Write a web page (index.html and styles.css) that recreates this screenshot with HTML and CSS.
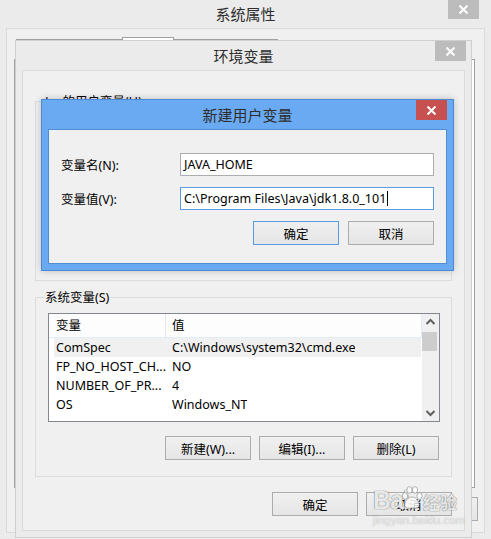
FILE: index.html
```html
<!DOCTYPE html>
<html lang="zh-CN">
<head>
<meta charset="utf-8">
<title>新建用户变量</title>
<link rel="stylesheet" href="styles.css">
</head>
<body>
<div class="desk">

  <!-- 系统属性 window (background) -->
  <section class="win sys">
    <div class="titlebar"><span class="title">系统属性</span><span class="close grey"><svg width="11" height="9" viewBox="0 0 11 9"><path d="M1.5 0.5 L9.5 8.5 M9.5 0.5 L1.5 8.5" stroke="#fff" stroke-width="2"/></svg></span></div>
    <div class="sys-client">
      <div class="tabs"><span class="tab t1"></span><span class="tab sel"></span><span class="tab t3"></span></div>
      <div class="tabpanel"></div>
      <div class="sys-btns"><span class="btn peek"></span></div>
    </div>
  </section>

  <!-- 环境变量 window -->
  <section class="win env">
    <div class="titlebar"><span class="title">环境变量</span><span class="close grey"><svg width="11" height="9" viewBox="0 0 11 9"><path d="M1.5 0.5 L9.5 8.5 M9.5 0.5 L1.5 8.5" stroke="#fff" stroke-width="2"/></svg></span></div>
    <div class="env-client">
      <div class="group user-group">
        <span class="gb-label">Lu 的用户变量(U)</span>
      </div>
      <div class="group sys-group">
        <span class="gb-label">系统变量(S)</span>
        <div class="listbox">
          <div class="list-main">
            <div class="lv-head"><span class="hc c1">变量</span><span class="hc c2">值</span></div>
            <div class="lv-rows">
              <div class="lv-row hover"><span class="c1">ComSpec</span><span class="c2">C:\Windows\system32\cmd.exe</span></div>
              <div class="lv-row"><span class="c1">FP_NO_HOST_CH...</span><span class="c2">NO</span></div>
              <div class="lv-row"><span class="c1">NUMBER_OF_PR...</span><span class="c2">4</span></div>
              <div class="lv-row"><span class="c1">OS</span><span class="c2">Windows_NT</span></div>
            </div>
          </div>
          <div class="vscroll">
            <svg class="arr" width="17" height="17" viewBox="0 0 17 17"><path d="M4.5 10 L8.5 6 L12.5 10" fill="none" stroke="#606060" stroke-width="2"/></svg>
            <div class="thumb"></div>
            <div class="track"></div>
            <svg class="arr" width="17" height="17" viewBox="0 0 17 17"><path d="M4.5 7 L8.5 11 L12.5 7" fill="none" stroke="#606060" stroke-width="2"/></svg>
          </div>
        </div>
        <div class="btn-row">
          <span class="btn">新建(W)...</span>
          <span class="btn">编辑(I)...</span>
          <span class="btn">删除(L)</span>
        </div>
      </div>
      <div class="btn-row bottom">
        <span class="btn">确定</span>
        <span class="btn">取消</span>
      </div>
    </div>
  </section>

  <!-- 新建用户变量 dialog (active) -->
  <section class="win dlg">
    <div class="titlebar"><span class="title">新建用户变量</span><span class="close red"><svg width="11" height="9" viewBox="0 0 11 9"><path d="M1.5 0.5 L9.5 8.5 M9.5 0.5 L1.5 8.5" stroke="#fff" stroke-width="2"/></svg></span></div>
    <div class="dlg-client">
      <div class="field">
        <label class="flabel">变量名(N):</label>
        <div class="input">JAVA_HOME</div>
      </div>
      <div class="field">
        <label class="flabel">变量值(V):</label>
        <div class="input focus">C:\Program Files\Java\jdk1.8.0_101<span class="caret"></span></div>
      </div>
      <div class="btn-row dlg-btns">
        <span class="btn default">确定</span>
        <span class="btn">取消</span>
      </div>
    </div>
  </section>

  <!-- Baidu watermark overlay -->
  <div class="watermark">
    <div class="wm-top">
      <span class="wm-bai">Bai</span>
      <svg class="wm-paw" width="22" height="26" viewBox="0 0 22 26">
        <g fill="rgba(255,255,255,0.8)" stroke="rgba(120,120,120,0.55)" stroke-width="1">
          <ellipse cx="4" cy="11" rx="2.6" ry="3.4"/>
          <ellipse cx="8.5" cy="5" rx="2.6" ry="3.4"/>
          <ellipse cx="14" cy="5" rx="2.6" ry="3.4"/>
          <ellipse cx="18.5" cy="11" rx="2.6" ry="3.4"/>
          <path d="M11 12 C6 12 3 18 4 21 C5 24 9 23 11 23 C13 23 17 24 18 21 C19 18 16 12 11 12 Z"/>
        </g>
      </svg>
      <span class="wm-jy">经验</span>
    </div>
    <div class="wm-url">jingyan.baidu.com</div>
  </div>

</div>
</body>
</html>
```
FILE: styles.css
```css
* { box-sizing: border-box; }

html, body {
  margin: 0;
  padding: 0;
  background: #ebebeb;
}

body {
  width: 491px;
  height: 539px;
  overflow: hidden;
  font-family: "Noto Sans", "Noto Sans CJK SC", sans-serif;
  font-size: 12.5px;
  color: #000;
}

.desk {
  position: relative;
  width: 491px;
  height: 539px;
  overflow: hidden;
}

/* ---------- generic window ---------- */
.win {
  position: absolute;
  background: #ebebeb;
}

.titlebar {
  position: relative;
  display: flex;
  align-items: center;
  justify-content: center;
}

.title {
  font-family: "Noto Sans CJK SC", sans-serif;
  font-size: 15px;
  color: #2e2e2e;
  line-height: 18px;
}

.close {
  position: absolute;
  top: 0;
  right: 6px;
  width: 31px;
  height: 20px;
  display: flex;
  align-items: center;
  justify-content: center;
}
.close.grey { background: #bcbcbc; }
.close.red { background: #c75050; }

/* ---------- 系统属性 ---------- */
.sys {
  left: 0;
  top: 0;
  width: 491px;
  height: 539px;
  padding: 0 6px;
}
.sys .titlebar { height: 28px; }
.sys .close { right: 6px; height: 19px; }

.sys-client {
  height: 505px;
  border: 1px solid #dadada;
  background: #f0f0f0;
}

.tabs {
  display: flex;
  align-items: flex-start;
  margin: 8px 0 0 9px;
  height: 22px;
}
.tab { height: 20px; margin-top: 2px; border-top: 1px solid #a0a0a0; }
.tab.t1 { width: 106px; }
.tab.sel {
  width: 52px;
  height: 22px;
  margin-top: 0;
  border: 1px solid #a0a0a0;
  border-bottom: none;
  background: #fff;
}
.tab.t3 { width: 104px; }

.tabpanel {
  margin-left: 7px;
  width: 461px;
  height: 429px;
  border: 1px solid #a0a0a0;
  background: #fff;
}

.sys-btns {
  display: flex;
  justify-content: flex-end;
  padding-right: 6px;
  margin-top: 9px;
}
.btn.peek { width: 87px; }

/* ---------- 环境变量 ---------- */
.env {
  left: 15px;
  top: 40px;
  width: 457px;
  height: 498px;
  border: 1px solid #cfcfcf;
  padding: 0 6px;
}
.env .titlebar { height: 29px; }
.env .close { right: -1px; }

.env-client {
  height: 461px;
  border: 1px solid #dadada;
  background: #f0f0f0;
  padding: 0 0 0 12px;
}

.group {
  width: 417px;
  border: 1px solid #dcdcdc;
  display: flex;
  flex-direction: column;
}
.user-group {
  margin-top: 30px;
  height: 180px;
}
.sys-group {
  margin-top: 16px;
  height: 180px;
  padding-left: 12px;
}

.gb-label {
  align-self: flex-start;
  margin: -9px 0 0 -4px;
  padding: 0 1px;
  background: #f0f0f0;
  line-height: 17px;
  font-size: 12.5px;
  color: #000;
}
.user-group .gb-label { margin-left: 8px; }

/* listbox */
.listbox {
  margin-top: 7px;
  width: 392px;
  height: 109px;
  border: 1px solid #828790;
  background: #fff;
  display: flex;
  overflow: hidden;
}
.list-main {
  flex: 1;
  overflow: hidden;
}
.lv-head {
  display: flex;
  height: 24px;
  line-height: 23px;
  width: 373px;
  border-bottom: 1px solid #e3ecf8;
  border-right: 1px solid #e3ecf8;
  background: #fdfdfd;
}
.hc.c1 {
  width: 117px;
  padding-left: 7px;
  border-right: 1px solid #e5e5e5;
}
.hc.c2 { padding-left: 6px; }

.lv-rows { margin-left: 5px; width: 367px; }
.lv-row {
  display: flex;
  height: 19px;
  line-height: 19px;
  white-space: nowrap;
}
.lv-row.hover { background: #f0f0f0; }
.lv-row .c1 { width: 118px; padding-left: 2px; flex: none; }
.lv-row .c2 { overflow: hidden; }

.vscroll {
  width: 17px;
  background: #f0f0f0;
  display: flex;
  flex-direction: column;
}
.vscroll .arr { display: block; flex: none; }
.thumb {
  width: 15px;
  height: 19px;
  margin-top: 1px;
  background: #cdcdcd;
}
.track { flex: 1; }

/* buttons */
.btn-row {
  display: flex;
  justify-content: flex-end;
  gap: 8px;
}
.sys-group .btn-row {
  margin-top: 14px;
  padding-right: 12px;
}
.btn {
  width: 86px;
  height: 24px;
  border: 1px solid #acacac;
  background: linear-gradient(#f0f0f0, #e5e5e5);
  display: flex;
  align-items: center;
  justify-content: center;
  font-size: 12.5px;
  color: #000;
}
.btn-row.bottom {
  margin-top: 15px;
  padding-right: 12px;
}

/* ---------- 新建用户变量 dialog ---------- */
.dlg {
  left: 41px;
  top: 99px;
  width: 413px;
  height: 172px;
  background: #6aaaf3;
  border: 1px solid #4a8ad6;
  padding: 0 6px;
  box-shadow: 0 0 7px rgba(0, 0, 0, 0.22);
}
.dlg .titlebar { height: 29px; }
.dlg .close { right: 0; top: 0; }

.dlg-client {
  height: 135px;
  border: 1px solid #4f8cd2;
  background: #f0f0f0;
  padding: 23px 12px 0 12px;
}

.field {
  display: flex;
  align-items: center;
  justify-content: space-between;
  margin-bottom: 11px;
}
.flabel {
  font-size: 12.5px;
}
.input {
  width: 254px;
  height: 23px;
  border: 1px solid #abadb3;
  background: #fff;
  padding-left: 3px;
  line-height: 21px;
  white-space: nowrap;
  display: flex;
  align-items: center;
}
.input.focus { border-color: #569de5; }
.caret {
  display: inline-block;
  width: 1px;
  height: 15px;
  margin-left: 1px;
  background: #000;
}

.dlg-btns {
  margin-top: 4px;
  gap: 9px;
}
.btn.default { border-color: #569de5; }

/* ---------- watermark ---------- */
.watermark {
  position: absolute;
  left: 373px;
  top: 485px;
  width: 96px;
  color: rgba(255, 255, 255, 0.85);
  pointer-events: none;
}
.wm-top {
  display: flex;
  align-items: flex-end;
  height: 28px;
}
.wm-bai {
  font-family: "Liberation Sans", sans-serif;
  font-weight: bold;
  font-size: 25px;
  line-height: 26px;
  letter-spacing: -1px;
  text-shadow: 0 0 1px rgba(90, 90, 90, 0.7), 0 0 1px rgba(90, 90, 90, 0.7);
}
.wm-paw { margin: 0 0 2px -8px; }
.wm-jy {
  font-family: "Noto Sans CJK SC", sans-serif;
  font-weight: bold;
  font-size: 17px;
  line-height: 22px;
  text-shadow: 0 0 1px rgba(90, 90, 90, 0.7), 0 0 1px rgba(90, 90, 90, 0.7);
}
.wm-url {
  font-family: "Liberation Sans", sans-serif;
  font-size: 11px;
  line-height: 13px;
  margin-top: 1px;
  letter-spacing: 0.2px;
  color: rgba(255, 255, 255, 0.8);
  text-shadow: 0 0 1px rgba(90, 90, 90, 0.6);
}
```
